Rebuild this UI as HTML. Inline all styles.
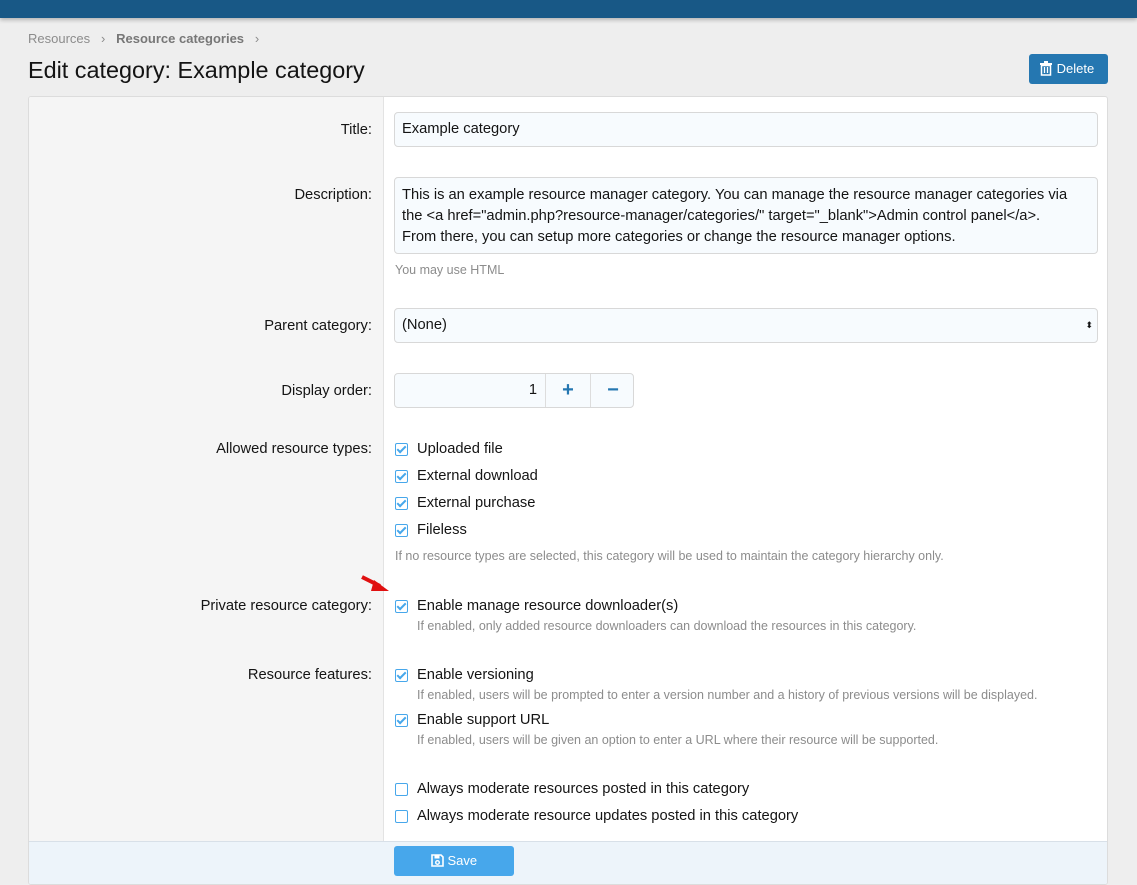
<!DOCTYPE html>
<html><head><style>
*{box-sizing:border-box;margin:0;padding:0}
body{width:1137px;height:885px;background:#eeeeee;font-family:"Liberation Sans",sans-serif;color:#141414;position:relative;overflow:hidden;font-size:14.7px}
.a{position:absolute;white-space:nowrap}
.top{position:absolute;left:0;top:0;width:1137px;height:18px;background:#185886;box-shadow:0 2px 4px rgba(0,0,0,.25)}
.panel{position:absolute;left:28px;top:96px;width:1080px;height:789px;background:#fff;border:1px solid #dcdcdc;border-radius:3px;overflow:hidden}
.left{position:absolute;left:0;top:0;width:355px;height:745px;background:#f5f5f5;border-right:1px solid #e3e3e3}
.foot{position:absolute;left:0;top:744px;width:1080px;height:45px;background:#edf4fa;border-top:1px solid #d8e0e8}
.lbl{position:absolute;right:735px;text-align:right;white-space:nowrap;font-size:14.7px;color:#141414}
.inp{position:absolute;background:#f7fbfe;border:1px solid #d8d8d8;border-radius:4px;font-size:14.7px;padding:0 7px}
.cb{position:absolute;width:13px;height:13px;border:1.5px solid #47a7eb;border-radius:2px;background:#fff}
.cb.on::after{content:"";position:absolute;left:3px;top:0px;width:3px;height:7px;border:solid #47a7eb;border-width:0 2px 2px 0;transform:rotate(45deg)}
.ct{position:absolute;font-size:14.7px;white-space:nowrap}
.hint{position:absolute;font-size:12.5px;color:#8c8c8c;white-space:nowrap}
</style></head><body>
<div class="top"></div>
<div class="a" style="left:28px;top:31px;font-size:13px;color:#8c8c8c">Resources &nbsp;&nbsp;›&nbsp;&nbsp; <b style="color:#777">Resource categories</b> &nbsp;&nbsp;›</div>
<div class="a" style="left:28px;top:57px;font-size:23.4px;color:#141414">Edit category: Example category</div>
<div class="a" style="left:1029px;top:54px;width:79px;height:30px;background:#2577b1;border-radius:3px;color:#fff;font-size:13px;line-height:30px;padding-left:10px">
<svg width="14" height="15" viewBox="0 0 14 15" style="vertical-align:-3px"><rect x="1" y="2" width="12" height="2" fill="#fff"/><rect x="5" y="0" width="4" height="2" fill="#fff"/><path d="M2.5 4.5h9v9.5h-9z" fill="none" stroke="#fff" stroke-width="1.5"/><path d="M5.5 6v6M8.5 6v6" stroke="#fff" stroke-width="1.3"/></svg> Delete</div>

<div class="panel">
<div class="left"></div>
<div class="foot"></div>
<div class="lbl" style="top:25px">Title:</div>
<div class="inp" style="left:365px;top:15px;width:704px;height:35px;line-height:33px">Example category</div>
<div class="lbl" style="top:90px">Description:</div>
<div class="inp" style="left:365px;top:80px;width:704px;height:77px;padding-top:7px;line-height:21px;white-space:nowrap">This is an example resource manager category. You can manage the resource manager categories via<br>the &lt;a href="admin.php?resource-manager/categories/" target="_blank"&gt;Admin control panel&lt;/a&gt;.<br>From there, you can setup more categories or change the resource manager options.</div>
<div class="hint" style="left:366px;top:166px">You may use HTML</div>
<div class="lbl" style="top:221px">Parent category:</div>
<div class="inp" style="left:365px;top:211px;width:704px;height:35px;line-height:33px">(None)<span style="position:absolute;right:4px;top:0;font-size:9px;line-height:33px">⬍</span></div>
<div class="lbl" style="top:286px">Display order:</div>
<div class="inp" style="left:365px;top:276px;width:240px;height:35px;line-height:33px;padding:0">
<span style="position:absolute;left:0;width:150px;text-align:right;padding-right:8px">1</span>
<span style="position:absolute;left:150px;width:45px;height:33px;border-left:1px solid #ddd;text-align:center;color:#2577b1;font-size:20px;font-weight:bold">+</span>
<span style="position:absolute;left:195px;width:45px;height:33px;border-left:1px solid #ddd;text-align:center;color:#2577b1;font-size:20px;font-weight:bold">−</span></div>
<div class="lbl" style="top:344px">Allowed resource types:</div>
<div class="cb on" style="left:366px;top:346px"></div><div class="ct" style="left:388px;top:344px">Uploaded file</div>
<div class="cb on" style="left:366px;top:373px"></div><div class="ct" style="left:388px;top:371px">External download</div>
<div class="cb on" style="left:366px;top:400px"></div><div class="ct" style="left:388px;top:398px">External purchase</div>
<div class="cb on" style="left:366px;top:427px"></div><div class="ct" style="left:388px;top:425px">Fileless</div>
<div class="hint" style="left:366px;top:452px">If no resource types are selected, this category will be used to maintain the category hierarchy only.</div>
<svg class="a" style="left:331px;top:477px" width="30" height="22" viewBox="0 0 30 22"><path d="M2 3 L20 12" stroke="#e01010" stroke-width="4"/><path d="M14 6 L29 17 L11 17z" fill="#e01010"/></svg>
<div class="lbl" style="top:501px">Private resource category:</div>
<div class="cb on" style="left:366px;top:503px"></div><div class="ct" style="left:388px;top:501px">Enable manage resource downloader(s)</div>
<div class="hint" style="left:388px;top:522px">If enabled, only added resource downloaders can download the resources in this category.</div>
<div class="lbl" style="top:570px">Resource features:</div>
<div class="cb on" style="left:366px;top:572px"></div><div class="ct" style="left:388px;top:570px">Enable versioning</div>
<div class="hint" style="left:388px;top:591px">If enabled, users will be prompted to enter a version number and a history of previous versions will be displayed.</div>
<div class="cb on" style="left:366px;top:617px"></div><div class="ct" style="left:388px;top:615px">Enable support URL</div>
<div class="hint" style="left:388px;top:636px">If enabled, users will be given an option to enter a URL where their resource will be supported.</div>
<div class="cb" style="left:366px;top:686px"></div><div class="ct" style="left:388px;top:684px">Always moderate resources posted in this category</div>
<div class="cb" style="left:366px;top:713px"></div><div class="ct" style="left:388px;top:711px">Always moderate resource updates posted in this category</div>
<div class="a" style="left:365px;top:749px;width:120px;height:30px;background:#47a7eb;border-radius:3px;color:#fff;font-size:13px;line-height:30px;text-align:center">
<svg width="13" height="13" viewBox="0 0 13 13" style="vertical-align:-2px"><path d="M1 1h9l2 2v9H1z" fill="none" stroke="#fff" stroke-width="1.6"/><rect x="3.5" y="1.5" width="5" height="3" fill="#fff"/><circle cx="6.5" cy="8.5" r="1.8" fill="none" stroke="#fff" stroke-width="1.4"/></svg> Save</div>
</div>
</body></html>
